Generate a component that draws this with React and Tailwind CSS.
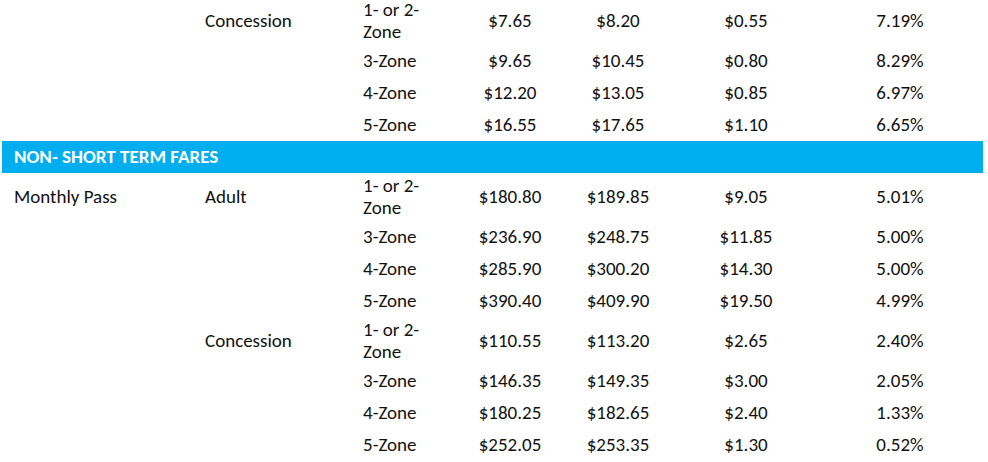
const font = { fontFamily: "Carlito, Calibri, Lato, 'Liberation Sans', sans-serif" };

const topRows = [
  { c2: "Concession", zone: "two", vals: ["$7.65", "$8.20", "$0.55", "7.19%"] },
  { zone: "3-Zone", vals: ["$9.65", "$10.45", "$0.80", "8.29%"] },
  { zone: "4-Zone", vals: ["$12.20", "$13.05", "$0.85", "6.97%"] },
  { zone: "5-Zone", vals: ["$16.55", "$17.65", "$1.10", "6.65%"] },
];

const monthlyRows = [
  { c1: "Monthly Pass", c2: "Adult", zone: "two", vals: ["$180.80", "$189.85", "$9.05", "5.01%"] },
  { zone: "3-Zone", vals: ["$236.90", "$248.75", "$11.85", "5.00%"] },
  { zone: "4-Zone", vals: ["$285.90", "$300.20", "$14.30", "5.00%"] },
  { zone: "5-Zone", vals: ["$390.40", "$409.90", "$19.50", "4.99%"] },
  { c2: "Concession", zone: "two", vals: ["$110.55", "$113.20", "$2.65", "2.40%"] },
  { zone: "3-Zone", vals: ["$146.35", "$149.35", "$3.00", "2.05%"] },
  { zone: "4-Zone", vals: ["$180.25", "$182.65", "$2.40", "1.33%"] },
  { zone: "5-Zone", vals: ["$252.05", "$253.35", "$1.30", "0.52%"] },
];

function FareRow({ c1, c2, zone, vals }) {
  const tall = zone === "two";
  return (
    <div
      className={`grid grid-cols-[191px_158px_97px_100px_116px_140px_168px] items-center pl-[14px] ${
        tall ? "h-12" : "h-8"
      }`}
    >
      <div>{c1}</div>
      <div>{c2}</div>
      <div>
        {tall ? (
          <>
            1- or 2-
            <br />
            Zone
          </>
        ) : (
          zone
        )}
      </div>
      {vals.map((v, i) => (
        <div key={i} className="text-center">
          {v}
        </div>
      ))}
    </div>
  );
}

export default function App() {
  return (
    <div className="h-[462px] w-[988px] overflow-hidden bg-white text-[19px] leading-[22px] text-[#111]" style={font}>
      <div className="-mt-[3px]">
        {topRows.map((r, i) => (
          <FareRow key={i} {...r} />
        ))}
      </div>
      <div className="ml-[2px] flex h-8 w-[981px] items-center bg-[#00adef] pl-[12px] text-[19px] font-bold text-white">
        NON- SHORT TERM FARES
      </div>
      {monthlyRows.map((r, i) => (
        <FareRow key={i} {...r} />
      ))}
    </div>
  );
}
